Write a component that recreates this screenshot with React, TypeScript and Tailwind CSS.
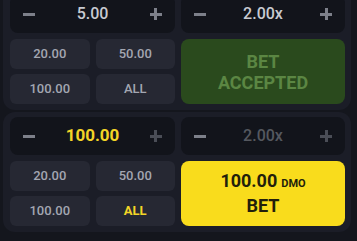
import React from "react";

function Minus({ dim }: { dim?: boolean }) {
  return <span className={`block h-[3px] w-3 ${dim ? "bg-[#4a4d56]" : "bg-[#7d808a]"}`} />;
}

function Plus({ dim }: { dim?: boolean }) {
  const c = dim ? "bg-[#4a4d56]" : "bg-[#7d808a]";
  return (
    <span className="relative block h-3 w-3">
      <span className={`absolute left-0 top-[4.5px] h-[3px] w-3 ${c}`} />
      <span className={`absolute left-[4.5px] top-0 h-3 w-[3px] ${c}`} />
    </span>
  );
}

function Stepper({ value, tone }: { value: string; tone: "normal" | "gold" | "dim" }) {
  const text =
    tone === "gold"
      ? "text-[#f3d527] font-bold text-[17px]"
      : tone === "dim"
      ? "text-[#55585f] font-medium text-[16px]"
      : "text-[#c8cad1] font-medium text-[16px]";
  return (
    <div className="flex h-[38px] items-center justify-between rounded-lg bg-[#12141b] px-[13px]">
      <Minus />
      <span className={text}>{value}</span>
      <Plus dim={tone === "gold" || tone === "dim"} />
    </div>
  );
}

function Quick({ label, gold }: { label: string; gold?: boolean }) {
  return (
    <div
      className={`flex h-[30px] items-center justify-center rounded-md bg-[#262833] text-[13px] ${
        gold ? "font-bold text-[#f3d527]" : "font-medium text-[#a3a6b1]"
      }`}
    >
      {label}
    </div>
  );
}

function QuickGrid({ goldAll }: { goldAll?: boolean }) {
  return (
    <div className="mt-[6px] grid grid-cols-2 gap-x-[6px] gap-y-[5px]">
      <Quick label="20.00" />
      <Quick label="50.00" />
      <Quick label="100.00" />
      <Quick label="ALL" gold={goldAll} />
    </div>
  );
}

export default function App() {
  return (
    <div
      className="h-[241px] w-[357px] overflow-hidden bg-[#14161d] pl-[3px] pr-[6px]"
      style={{ fontFamily: "Roboto, 'Noto Sans', sans-serif" }}
    >
      <div className="mt-[-11px] grid grid-cols-[165px_164px] gap-x-[6px] rounded-xl bg-[#1b1d27] px-[7px] pb-[6px] pt-[6px]">
        <div>
          <Stepper value="5.00" tone="normal" />
          <QuickGrid />
        </div>
        <div>
          <Stepper value="2.00x" tone="normal" />
          <div className="mt-[6px] flex h-[65px] flex-col items-center justify-center rounded-lg bg-[#2a4a1d] text-[18px] font-bold leading-[21px] text-[#5b8643]">
            <span>BET</span>
            <span>ACCEPTED</span>
          </div>
        </div>
      </div>
      <div className="mt-[2px] grid grid-cols-[165px_164px] gap-x-[6px] rounded-xl bg-[#1b1d27] px-[7px] pb-[6px] pt-[5px]">
        <div>
          <Stepper value="100.00" tone="gold" />
          <QuickGrid goldAll />
        </div>
        <div>
          <Stepper value="2.00x" tone="dim" />
          <div className="mt-[6px] flex h-[65px] flex-col items-center justify-center rounded-lg bg-[#f9dc1c] font-bold text-[#231f0b]">
            <div className="flex items-baseline gap-[4px] leading-[22px]">
              <span className="text-[18px]">100.00</span>
              <span className="text-[11px]">DMO</span>
            </div>
            <span className="text-[18px] leading-[22px]">BET</span>
          </div>
        </div>
      </div>
    </div>
  );
}
